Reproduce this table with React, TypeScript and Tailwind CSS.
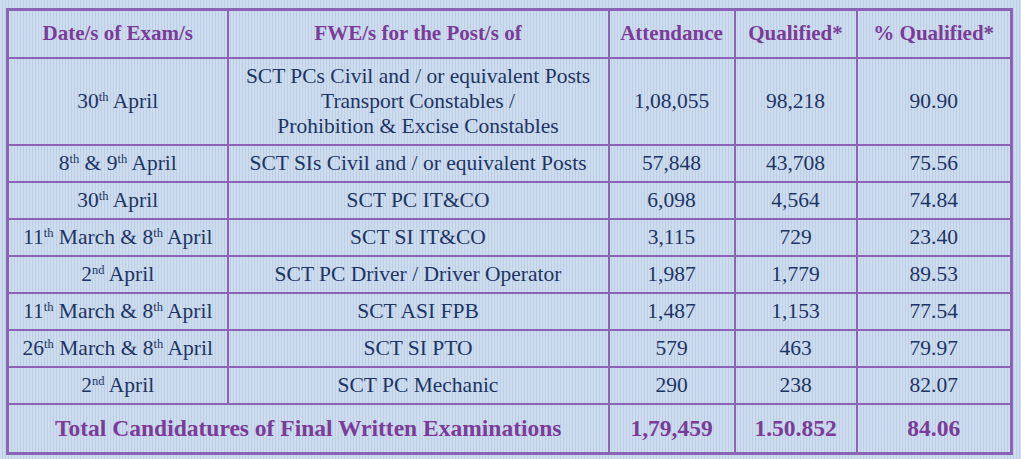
import React from 'react';

type Row = {
  date: React.ReactNode;
  post: React.ReactNode;
  attendance: string;
  qualified: string;
  pct: string;
  tall?: boolean;
};

const Sup = ({ children }: { children: React.ReactNode }) => (
  <sup className="text-[12.5px] relative -top-[7px]">{children}</sup>
);

const rows: Row[] = [
  {
    date: <>30<Sup>th</Sup> April</>,
    post: (
      <>
        SCT PCs Civil and / or equivalent Posts
        <br />
        Transport Constables /
        <br />
        Prohibition &amp; Excise Constables
      </>
    ),
    attendance: '1,08,055',
    qualified: '98,218',
    pct: '90.90',
    tall: true,
  },
  {
    date: <>8<Sup>th</Sup> &amp; 9<Sup>th</Sup> April</>,
    post: 'SCT SIs Civil and / or equivalent Posts',
    attendance: '57,848',
    qualified: '43,708',
    pct: '75.56',
  },
  { date: <>30<Sup>th</Sup> April</>, post: 'SCT PC IT&CO', attendance: '6,098', qualified: '4,564', pct: '74.84' },
  {
    date: <>11<Sup>th</Sup> March &amp; 8<Sup>th</Sup> April</>,
    post: 'SCT SI IT&CO',
    attendance: '3,115',
    qualified: '729',
    pct: '23.40',
  },
  {
    date: <>2<Sup>nd</Sup> April</>,
    post: 'SCT PC Driver / Driver Operator',
    attendance: '1,987',
    qualified: '1,779',
    pct: '89.53',
  },
  {
    date: <>11<Sup>th</Sup> March &amp; 8<Sup>th</Sup> April</>,
    post: 'SCT ASI FPB',
    attendance: '1,487',
    qualified: '1,153',
    pct: '77.54',
  },
  {
    date: <>26<Sup>th</Sup> March &amp; 8<Sup>th</Sup> April</>,
    post: 'SCT SI PTO',
    attendance: '579',
    qualified: '463',
    pct: '79.97',
  },
  { date: <>2<Sup>nd</Sup> April</>, post: 'SCT PC Mechanic', attendance: '290', qualified: '238', pct: '82.07' },
];

const cell = 'border-2 border-[#8c64b6] text-center p-0 whitespace-nowrap';

export default function App() {
  return (
    <div className="w-[1021px] h-[459px] overflow-hidden pt-[8px] pl-[6px] bg-[repeating-linear-gradient(90deg,#cddcee_0px,#cddcee_2px,#bccfe4_2px,#bccfe4_3px)] text-[#1d3564] font-['Liberation_Serif','Times_New_Roman',serif]">
      <table className="table-fixed border-collapse border-[3px] border-[#8c64b6] w-[1004px]">
        <colgroup>
          <col className="w-[220px]" />
          <col className="w-[381px]" />
          <col className="w-[126px]" />
          <col className="w-[122px]" />
          <col className="w-[155px]" />
        </colgroup>
        <thead>
          <tr className="h-[48px] text-[#7a3c98] text-[21px]">
            <th className={cell + ' font-bold'}>Date/s of Exam/s</th>
            <th className={cell + ' font-bold'}>FWE/s for the Post/s of</th>
            <th className={cell + ' font-bold'}>Attendance</th>
            <th className={cell + ' font-bold'}>Qualified*</th>
            <th className={cell + ' font-bold'}>% Qualified*</th>
          </tr>
        </thead>
        <tbody className="text-[21.5px] leading-[25px]">
          {rows.map((r, i) => (
            <tr key={i} className={r.tall ? 'h-[87px]' : 'h-[37px]'}>
              <td className={cell}>{r.date}</td>
              <td className={cell}>{r.post}</td>
              <td className={cell}>{r.attendance}</td>
              <td className={cell}>{r.qualified}</td>
              <td className={cell}>{r.pct}</td>
            </tr>
          ))}
          <tr className="h-[50px] text-[#7a3c98] font-bold text-[23.5px]">
            <td colSpan={2} className={cell}>
              Total Candidatures of Final Written Examinations
            </td>
            <td className={cell}>1,79,459</td>
            <td className={cell}>1.50.852</td>
            <td className={cell}>84.06</td>
          </tr>
        </tbody>
      </table>
      <p className="pl-[40px] mt-[2px] text-[19px] leading-[22px] text-[#1d3564]">
        * Qualified candidates are eligible for the next stage of Selection Process
      </p>
    </div>
  );
}
